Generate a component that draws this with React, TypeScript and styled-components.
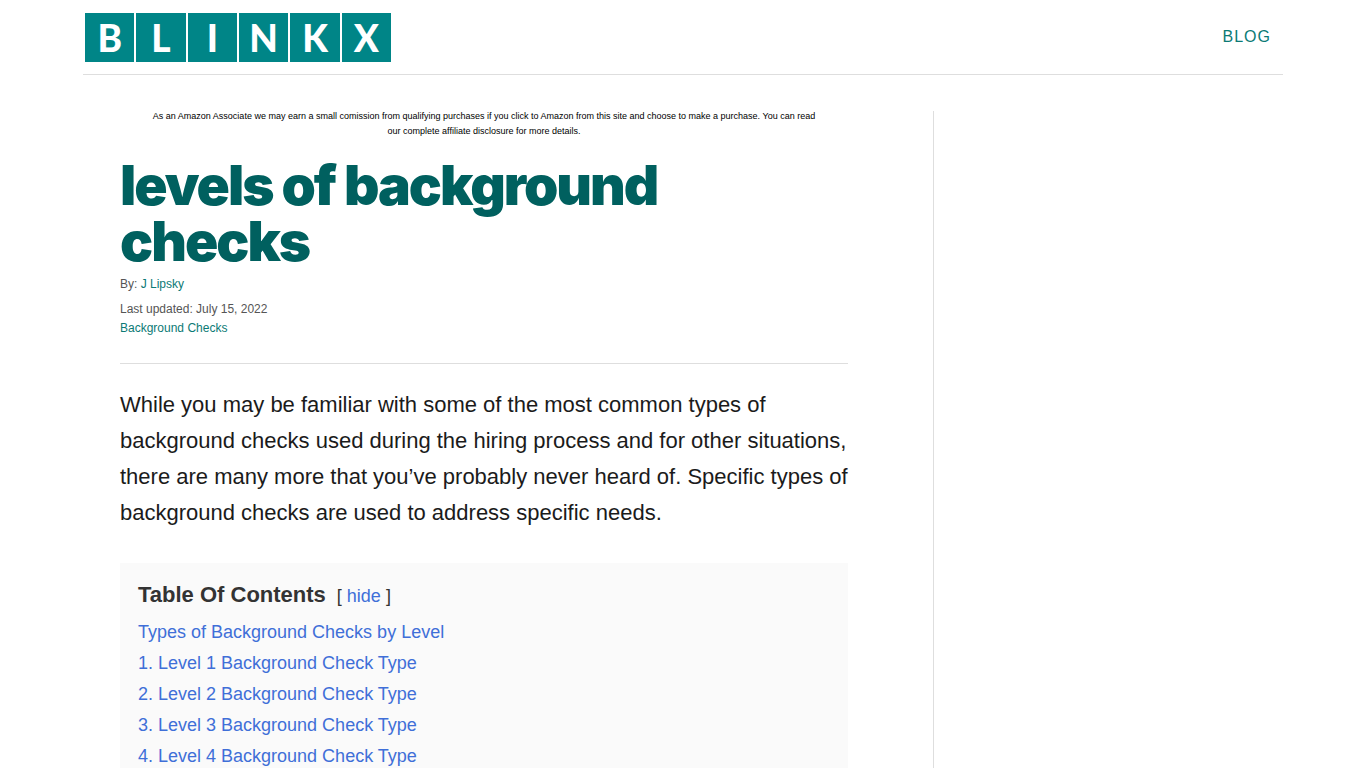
import React, { useState } from "react";
import styled, { createGlobalStyle } from "styled-components";

const GlobalStyle = createGlobalStyle`
  *, *::before, *::after { box-sizing: border-box; }
  html { overflow-x: hidden; scrollbar-width: none; }
  body {
    margin: 0;
    background: #fff;
    color: #1b1b1b;
    font-family: "Liberation Sans", Arial, sans-serif;
  }
  a { text-decoration: none; }
  a:hover { text-decoration: underline; }
`;

const Wrapper = styled.div`
  max-width: 1200px;
  margin: 0 auto;
`;

const Header = styled.header`
  display: flex;
  justify-content: space-between;
  align-items: center;
  height: 75px;
  padding: 0 12px 0 2px;
  border-bottom: 1px solid #dedede;
`;

const Logo = styled.a`
  display: grid;
  grid-template-columns: repeat(6, 1fr);
  column-gap: 2px;
  width: 306px;
  &:hover { text-decoration: none; }
`;

const Tile = styled.span`
  height: 49px;
  background: #008587;
  color: #fff;
  font: 900 37px/49px Lato, sans-serif;
  text-align: center;
`;

const NavLink = styled.a`
  color: #0b7a75;
  font-size: 16px;
  line-height: 24px;
  letter-spacing: 1px;
  text-transform: uppercase;
`;

const Columns = styled.div`
  display: grid;
  grid-template-columns: minmax(0, 1fr) 350px;
  margin-top: 36px;
`;

const Main = styled.main`
  padding: 0 85px 0 37px;
`;

const Sidebar = styled.aside`
  border-left: 1px solid #dedede;
`;

const Disclosure = styled.p`
  margin: -2px 0 18px;
  padding: 0 30px;
  color: #000;
  font-size: 9px;
  line-height: 15px;
  text-align: center;
`;

const Title = styled.h1`
  margin: 0;
  color: #00605f;
  font: 900 55px/56px Inter, sans-serif;
  letter-spacing: -2px;
`;

const Meta = styled.div`
  display: flex;
  flex-direction: column;
  padding: 6px 0 25px;
  border-bottom: 1px solid #dedede;
  color: #555;
  font-size: 12px;
  line-height: 19px;
  a { color: #0b7a75; }
`;

const Byline = styled.span`
  margin-bottom: 6px;
`;

const Intro = styled.p`
  margin: 23px 0 32px;
  font-size: 22px;
  line-height: 36px;
`;

const Toc = styled.nav`
  padding: 16px 18px;
  background: #fafafa;
  color: #333;
  font-size: 18px;
  line-height: 31px;
  a { color: #3f6fd8; }
`;

const TocHead = styled.div`
  display: flex;
  align-items: baseline;
  gap: 11px;
  margin-bottom: 5px;
`;

const TocTitle = styled.h2`
  margin: 0;
  font-size: 22px;
  line-height: 31px;
`;

const Toggle = styled.button`
  padding: 0;
  border: 0;
  background: none;
  color: #3f6fd8;
  font: inherit;
  cursor: pointer;
`;

const TocList = styled.ul`
  margin: 0;
  padding: 0;
  list-style: none;
`;

const entries = [
  "Types of Background Checks by Level",
  "1. Level 1 Background Check Type",
  "2. Level 2 Background Check Type",
  "3. Level 3 Background Check Type",
  "4. Level 4 Background Check Type",
];

export default function App() {
  const [open, setOpen] = useState(true);
  return (
    <>
      <GlobalStyle />
      <Wrapper>
        <Header>
          <Logo href="#" aria-label="Blinkx">
            {"BLINKX".split("").map((letter) => (
              <Tile key={letter}>{letter}</Tile>
            ))}
          </Logo>
          <nav>
            <NavLink href="#blog">Blog</NavLink>
          </nav>
        </Header>
        <Columns>
          <Main>
            <Disclosure>
              As an Amazon Associate we may earn a small comission from qualifying purchases if you
              click to Amazon from this site and choose to make a purchase. You can read our
              complete affiliate disclosure for more details.
            </Disclosure>
            <Title>levels of background checks</Title>
            <Meta>
              <Byline>
                By: <a href="#author">J Lipsky</a>
              </Byline>
              <span>Last updated: July 15, 2022</span>
              <a href="#category">Background Checks</a>
            </Meta>
            <Intro>
              While you may be familiar with some of the most common types of background checks used
              during the hiring process and for other situations, there are many more that you’ve
              probably never heard of. Specific types of background checks are used to address
              specific needs.
            </Intro>
            <Toc aria-label="Table of contents">
              <TocHead>
                <TocTitle>Table Of Contents</TocTitle>
                <span>
                  [ <Toggle onClick={() => setOpen(!open)}>{open ? "hide" : "show"}</Toggle> ]
                </span>
              </TocHead>
              {open && (
                <TocList>
                  {entries.map((entry) => (
                    <li key={entry}>
                      <a href="#section">{entry}</a>
                    </li>
                  ))}
                </TocList>
              )}
            </Toc>
          </Main>
          <Sidebar />
        </Columns>
      </Wrapper>
    </>
  );
}
